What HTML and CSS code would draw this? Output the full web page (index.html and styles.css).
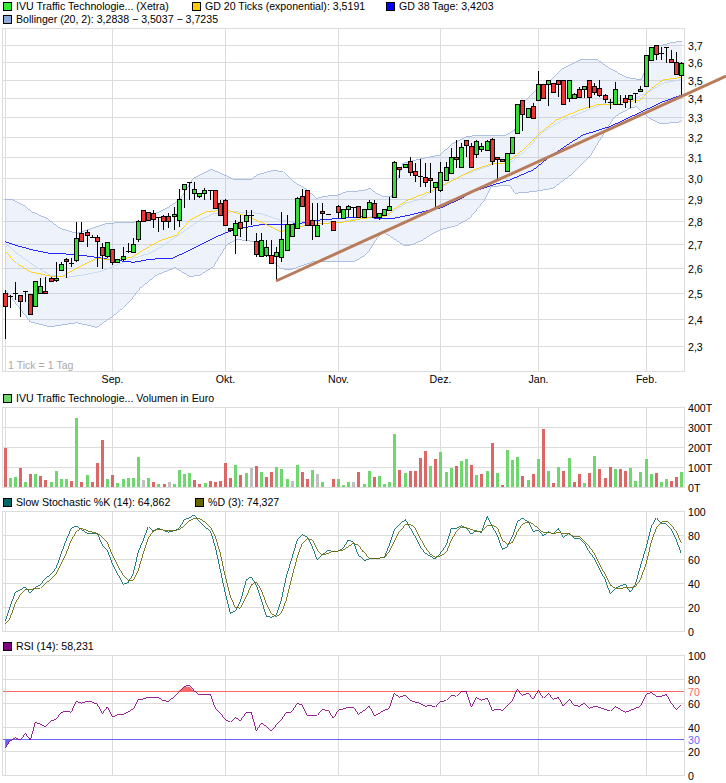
FILE: index.html
```html
<!DOCTYPE html>
<html lang="de">
<head>
    <meta charset="UTF-8">
    <title>IVU Traffic Technologies Chart</title>
    <link rel="stylesheet" href="styles.css">
</head>
<body>

    <div class="chart">
        <div class="legend">
            <div class="legend-row">
                <span class="legend-item item-wide"><i class="swatch sw-green"></i>IVU Traffic Technologie... (Xetra)</span>
                <span class="legend-item item-wider"><i class="swatch sw-yellow"></i>GD 20 Ticks (exponential): 3,5191</span>
                <span class="legend-item"><i class="swatch sw-blue"></i>GD 38 Tage: 3,4203</span>
            </div>
            <div class="legend-row">
                <span class="legend-item"><i class="swatch sw-band"></i>Bollinger (20, 2): 3,2838 − 3,5037 − 3,7235</span>
            </div>
        </div>
        <svg id="price" class="plot" width="726" height="366" viewBox="0 26 726 366"></svg>

        <div class="legend">
            <div class="legend-row">
                <span class="legend-item"><i class="swatch sw-volume"></i>IVU Traffic Technologie... Volumen in Euro</span>
            </div>
        </div>
        <svg id="volume" class="plot" width="726" height="91" viewBox="0 405 726 91"></svg>

        <div class="legend">
            <div class="legend-row">
                <span class="legend-item item-stoch"><i class="swatch sw-teal"></i>Slow Stochastic %K (14): 64,862</span>
                <span class="legend-item"><i class="swatch sw-olive"></i>%D (3): 74,327</span>
            </div>
        </div>
        <svg id="stoch" class="plot" width="726" height="131" viewBox="0 509 726 131"></svg>

        <div class="legend">
            <div class="legend-row">
                <span class="legend-item"><i class="swatch sw-purple"></i>RSI (14): 58,231</span>
            </div>
        </div>
        <svg id="rsi" class="plot" width="726" height="130" viewBox="0 653 726 130"></svg>
    </div>

    <script src="script.js"></script>
</body>
</html>
```

FILE: styles.css
```css
body {
    margin: 0;
    padding: 0;
    background-color: white;
    font-family: 'Liberation Sans', Arial, sans-serif;
    font-size: 10.6px;
    color: #000;
}

.chart {
    width: 726px;
    height: 783px;
    overflow: hidden;
}

.plot {
    display: block;
    overflow: visible;
}

.legend-row {
    display: flex;
    height: 13px;
    line-height: 13px;
    padding-left: 3px;
    white-space: nowrap;
}

.legend-item {
    display: flex;
    align-items: center;
}

.item-wide {
    width: 189px;
}

.item-wider {
    width: 194px;
}

.item-stoch {
    width: 192px;
}

.swatch {
    width: 7px;
    height: 7px;
    margin-right: 4px;
    border: 1px solid #000;
}

.sw-green { background-color: #33ee33; }
.sw-yellow { background-color: #ffcc00; }
.sw-blue { background-color: #0000ff; }
.sw-band { background-color: #8caadc; }
.sw-volume { background-color: #6ed86e; }
.sw-teal { background-color: #006666; }
.sw-olive { background-color: #666600; }
.sw-purple { background-color: #800080; }

.plot text {
    font-family: 'Liberation Sans', Arial, sans-serif;
    font-size: 10.6px;
    fill: #000;
    dominant-baseline: central;
}

.plot .month {
    text-anchor: middle;
}

.plot .tick-note {
    fill: #aaa;
}

.plot .over { fill: #ff6666; }
.plot .under { fill: #6666ff; }

.grid {
    stroke: #dcdcdc;
    stroke-width: 1;
    shape-rendering: crispEdges;
}

.series {
    fill: none;
    stroke-width: 0.85;
    shape-rendering: crispEdges;
}

.band-fill {
    fill: #8cafe6;
    fill-opacity: 0.15;
    stroke: none;
}

.band-line { stroke: #9fb4de; }
.band-mid { stroke: #c3d4f2; }
.ema-line { stroke: #ffcc00; }
.sma-line { stroke: #0000ff; }
.k-line { stroke: #006666; }
.d-line { stroke: #666600; }
.rsi-line { stroke: #800080; }
.over-line { stroke: #ff6666; stroke-width: 1; }
.under-line { stroke: #6666ff; stroke-width: 1; }

.trend {
    stroke: #b97c5b;
    stroke-width: 3;
}

.wick {
    stroke: #000;
    shape-rendering: crispEdges;
}

.body {
    stroke: #000;
    shape-rendering: crispEdges;
}

.up { fill: #33dd33; }
.down { fill: #ee3333; }

.vol-up { fill: #6ed86e; }
.vol-down { fill: #dd6666; }
.vol-flat { fill: #c0c0c0; }

.fill-over { fill: #ff6666; }
.fill-under { fill: #6666ff; }
```

FILE: script.js
```js
// All series below are kept in 3x units (pixel * 3), the right half has its x counted from 1089.
const SVG_NS = 'http://www.w3.org/2000/svg';
const RIGHT = 1089;

const monthLines = [5, 112, 225, 338, 440, 538, 646];
const months = [[112, 'Sep.'], [225, 'Okt.'], [338, 'Nov.'], [440, 'Dez.'], [538, 'Jan.'], [646, 'Feb.']];

function el(svg, tag, attrs, text) {
    const node = document.createElementNS(SVG_NS, tag);
    for (const key in attrs) {
        node.setAttribute(key, attrs[key]);
    }
    if (text) {
        node.textContent = text;
    }
    svg.appendChild(node);
    return node;
}

function drawGrid(svg, top, bottom, rows) {
    for (const y of rows) {
        el(svg, 'line', { class: 'grid', x1: 2, x2: 685, y1: y + 0.5, y2: y + 0.5 });
    }
    el(svg, 'line', { class: 'grid', x1: 2.5, x2: 2.5, y1: top, y2: bottom + 1 });
    el(svg, 'line', { class: 'grid', x1: 684.5, x2: 684.5, y1: top, y2: bottom + 1 });
    for (const x of monthLines) {
        el(svg, 'line', { class: 'grid', x1: x + 0.5, x2: x + 0.5, y1: top, y2: bottom + 1 });
    }
}

function drawLabels(svg, labels) {
    for (const [y, text, extra] of labels) {
        el(svg, 'text', { x: 688, y: y + 0.5, class: extra || '' }, text);
    }
}

// left and right are flat x,y lists
function toPoints(left, right) {
    const pts = [];
    for (let i = 0; i < left.length; i += 2) {
        pts.push([left[i] / 3, left[i + 1] / 3]);
    }
    for (let i = 0; i < right.length; i += 2) {
        pts.push([(right[i] + RIGHT) / 3, right[i + 1] / 3]);
    }
    return pts;
}

function pointsAttr(pts) {
    return pts.map(p => p[0].toFixed(1) + ',' + p[1].toFixed(1)).join(' ');
}

function drawSeries(svg, cls, left, right, dy) {
    const pts = toPoints(left, right).map(p => [p[0], p[1] + (dy || 0)]);
    el(svg, 'polyline', { class: 'series ' + cls, points: pointsAttr(pts) });
    return pts;
}

/* ---- price panel ---- */
const upperL = [16,598,40,600,70,615,95,635,140,655,180,685,230,700,260,690,320,670,390,667,420,665,445,650,500,625,530,605,540,598,580,535,635,508,700,537,755,538,770,525,820,511,850,515,880,545,915,565,950,595,975,589,1015,585,1040,575,1089,572];
const upperR = [20,565,40,580,60,590,85,590,120,490,170,477,230,465,270,430,310,410,350,405,430,405,455,390,470,320,520,270,560,245,600,205,650,180,700,177,740,205,790,232,835,240,850,200,880,140,900,135,930,127,957,124];
const lowerL = [16,870,40,900,90,965,150,980,230,968,290,982,340,948,385,910,420,865,470,825,525,803,570,830,600,825,640,800,680,735,710,718,765,725,800,765,840,805,870,810,940,785,1000,783,1060,785,1089,770];
const lowerR = [20,750,45,710,60,695,90,715,125,738,150,733,180,720,210,700,235,688,280,677,320,655,365,600,385,560,440,555,455,580,510,575,570,565,630,520,680,470,735,380,755,350,800,325,820,320,860,355,890,370,945,368,957,360];
const midL = [16,730,50,760,100,795,150,825,200,832,250,825,300,815,350,795,400,775,450,760,500,730,550,695,600,660,640,642,700,635,780,640,840,660,900,670,960,672,1020,665,1089,655];
const midR = [80,640,130,610,165,600,200,580,300,525,400,490,440,490,490,450,540,395,600,360,700,320,740,305,800,300,850,280,900,250,957,238];
const emaL = [16,755,50,790,90,815,150,828,185,830,230,805,290,775,340,780,395,772,430,750,480,722,530,705,570,660,620,635,680,630,730,645,780,665,840,695,880,685,920,675,980,670,1040,665,1089,655];
const emaR = [60,650,75,645,90,630,120,610,135,600,200,575,270,540,330,510,390,490,430,490,480,450,530,400,580,360,650,330,700,315,750,312,830,300,860,270,900,240,957,232];
const smaL = [16,725,50,737,100,750,150,760,220,763,290,772,340,780,400,787,450,778,520,774,580,745,640,715,680,697,720,685,790,673,850,675,900,670,960,660,1020,655,1089,650];
const smaR = [60,657,90,655,140,645,200,630,230,625,290,598,330,575,390,555,440,540,510,510,560,470,620,430,660,405,740,380,900,305,957,285];

// x, wick top, wick bottom, body top, body bottom, kind (g, r, d = doji)
const candlesL = [
    [16,870,1017,880,920,'r'],[31,885,925,888,888,'d'],[46,847,900,880,880,'d'],[61,885,950,887,905,'r'],
    [76,875,905,875,875,'d'],[91,883,943,883,943,'r'],[106,845,920,845,920,'g'],[121,835,880,860,880,'g'],
    [136,830,880,874,881,'r'],[154,830,845,836,845,'r'],[169,785,845,836,841,'g'],[184,785,812,793,812,'g'],
    [199,773,833,778,785,'r'],[214,775,800,790,790,'d'],[229,667,785,715,780,'g'],[244,667,725,700,725,'r'],
    [262,690,740,697,706,'r'],[277,705,715,712,712,'d'],[292,705,800,712,725,'r'],[307,730,807,742,767,'r'],
    [322,727,775,727,770,'g'],[337,748,795,748,787,'r'],[352,778,787,778,787,'g'],[370,740,782,769,779,'g'],
    [385,730,758,755,755,'d'],[400,715,758,733,758,'g'],[415,660,725,665,719,'g'],[430,631,665,631,665,'r'],
    [445,637,660,637,660,'r'],[460,630,685,640,658,'r'],[475,650,695,652,652,'d'],[490,645,690,650,665,'r'],
    [505,640,685,650,665,'r'],[523,620,690,643,650,'g'],[538,568,680,598,662,'g'],[553,553,625,553,568,'g'],
    [568,547,600,547,547,'d'],[583,547,600,568,580,'g'],[598,580,593,580,590,'g'],[613,565,600,571,580,'g'],
    [631,572,600,572,572,'d'],[646,572,625,572,625,'r'],[661,600,647,610,647,'r'],[676,597,677,600,677,'r'],
    [691,685,695,685,692,'r'],[706,660,762,670,707,'g'],[721,645,710,667,685,'r'],[739,630,722,646,665,'g'],
    [754,630,675,646,646,'d'],[769,700,770,725,763,'r'],[784,700,770,722,770,'g'],[799,720,770,742,765,'g'],
    [814,720,790,765,790,'r'],[829,740,843,757,770,'g'],[844,637,785,718,772,'g'],[862,645,750,673,751,'g'],
    [877,673,710,673,710,'g'],[892,590,685,594,685,'g'],[907,568,620,590,620,'r'],[922,571,677,571,677,'r'],
    [937,610,720,662,677,'r'],[952,610,710,677,710,'g'],[967,610,675,633,641,'r'],[985,642,642,642,642,'d'],
    [1000,665,692,665,692,'r'],[1015,615,655,620,637,'r'],[1030,628,655,628,655,'g'],[1045,615,650,620,628,'g'],
    [1060,622,655,622,622,'d'],[1075,620,653,620,653,'r']
];
const candlesR = [
    [4,627,652,627,652,'g'],[19,600,627,607,627,'g'],[34,600,652,610,652,'r'],[49,640,660,640,652,'g'],
    [64,627,647,627,647,'g'],[79,590,632,618,632,'g'],[94,484,592,487,592,'g'],[109,505,535,503,509,'r'],
    [127,492,503,492,503,'g'],[142,472,527,484,516,'r'],[157,490,545,515,526,'r'],[172,478,560,530,530,'d'],
    [187,490,560,532,547,'r'],[202,490,580,535,541,'r'],[217,545,620,547,562,'g'],[232,485,575,517,571,'g'],
    [250,485,541,502,541,'g'],[265,445,520,472,520,'g'],[280,420,505,472,478,'r'],[295,430,505,442,502,'g'],
    [310,420,472,421,436,'r'],[325,430,505,439,502,'r'],[340,420,475,424,463,'g'],[355,430,455,439,448,'g'],
    [373,420,451,424,451,'g'],[388,415,495,418,484,'r'],[403,470,537,472,478,'r'],[418,478,484,479,484,'r'],
    [433,458,514,460,514,'g'],[448,412,460,412,460,'g'],[463,313,400,313,400,'g'],[478,300,392,301,343,'r'],
    [496,325,352,325,352,'g'],[511,310,358,320,356,'r'],[526,213,300,253,301,'g'],[541,253,295,253,295,'r'],
    [556,240,318,241,253,'g'],[571,250,277,250,277,'r'],[586,240,290,241,253,'r'],[601,241,313,241,313,'r'],
    [619,240,305,241,295,'g'],[634,280,295,283,295,'g'],[649,260,295,268,292,'r'],[664,258,295,259,268,'g'],
    [679,240,323,241,292,'r'],[694,250,285,259,277,'r'],[709,240,290,265,286,'r'],[727,283,308,286,298,'r'],
    [742,297,326,307,307,'d'],[757,247,315,268,313,'g'],[772,285,315,313,313,'d'],[787,285,325,295,307,'r'],
    [802,285,325,286,298,'g'],[817,280,310,280,280,'d'],[832,258,275,268,274,'g'],[850,166,259,166,259,'g'],
    [865,140,181,142,181,'g'],[880,135,180,136,163,'r'],[895,140,180,160,160,'d'],[910,140,188,143,143,'d'],
    [925,150,188,178,187,'r'],[940,155,225,187,223,'r'],[955,187,285,190,226,'g']
];

function drawCandle(svg, c, offset) {
    const x = Math.floor((c[0] + offset) / 3);
    el(svg, 'line', { class: 'wick', x1: x + 0.5, x2: x + 0.5, y1: c[1] / 3, y2: c[2] / 3 });
    if (c[5] === 'd') {
        const y = Math.floor(c[3] / 3) + 0.5;
        el(svg, 'line', { class: 'wick', x1: x - 2, x2: x + 3, y1: y, y2: y });
        return;
    }
    const top = Math.floor(c[3] / 3) + 0.5;
    const bottom = Math.floor(c[4] / 3) + 0.5;
    el(svg, 'rect', {
        class: 'body ' + (c[5] === 'g' ? 'up' : 'down'),
        x: x - 1.5, y: top, width: 4, height: Math.max(bottom - top, 1)
    });
}

function drawPrice() {
    const svg = document.getElementById('price');
    drawGrid(svg, 28, 371, [28,45,62,80,98,117,137,157,178,199,221,244,268,293,319,346,371]);

    const upper = toPoints(upperL, upperR);
    const lower = toPoints(lowerL, lowerR);
    el(svg, 'polygon', { class: 'band-fill', points: pointsAttr(upper.concat(lower.slice().reverse())) });
    drawSeries(svg, 'band-line', upperL, upperR);
    drawSeries(svg, 'band-line', lowerL, lowerR);
    drawSeries(svg, 'band-mid', midL, midR);
    drawSeries(svg, 'sma-line', smaL, smaR);
    drawSeries(svg, 'ema-line', emaL, emaR);

    candlesL.forEach(c => drawCandle(svg, c, 0));
    candlesR.forEach(c => drawCandle(svg, c, RIGHT));

    el(svg, 'line', { class: 'trend', x1: 276, y1: 281, x2: 726, y2: 76 });

    drawLabels(svg, [[45,'3,7'],[62,'3,6'],[80,'3,5'],[98,'3,4'],[117,'3,3'],[137,'3,2'],[157,'3,1'],[178,'3,0'],[199,'2,9'],[221,'2,8'],[244,'2,7'],[268,'2,6'],[293,'2,5'],[319,'2,4'],[346,'2,3']]);
    for (const [x, text] of months) {
        el(svg, 'text', { x: x + 0.5, y: 379, class: 'month' }, text);
    }
    el(svg, 'text', { x: 8, y: 365, class: 'tick-note' }, '1 Tick = 1 Tag');
}

/* ---- volume panel ---- x, height in pixels, kind (g, r, n) */
const volumeL = [16,39,'r',31,9,'g',46,10,'g',61,19,'r',76,5,'g',91,13,'r',106,13,'g',121,11,'r',136,7,'r',154,5,'g',169,16,'g',184,8,'g',199,8,'g',214,6,'r',229,69,'g',244,5,'r',262,12,'g',277,5,'r',292,24,'r',307,47,'r',322,8,'g',337,12,'r',352,4,'g',370,8,'g',385,9,'g',400,9,'g',415,30,'g',430,7,'n',445,9,'g',460,5,'r',475,3,'g',493,3,'r',508,5,'n',523,3,'g',538,17,'g',553,13,'g',568,14,'g',583,7,'r',598,3,'r',616,4,'g',631,6,'r',646,5,'r',661,6,'r',676,24,'r',691,9,'r',706,22,'g',721,12,'r',739,14,'g',754,19,'n',769,21,'r',784,15,'g',799,10,'r',814,15,'r',829,20,'g',844,18,'g',862,8,'g',877,6,'n',892,22,'g',907,15,'r',922,8,'r',937,17,'g',952,13,'n',967,5,'g',1000,8,'r',1015,8,'g',1030,2,'g',1045,5,'g',1060,5,'n',1075,15,'r'];
const volumeR = [4,3,'g',19,16,'g',34,10,'r',49,11,'g',64,3,'g',79,5,'g',94,53,'g',109,17,'r',127,14,'g',142,16,'r',157,16,'r',172,29,'r',187,36,'r',202,21,'g',217,28,'r',232,35,'g',250,15,'g',265,19,'g',280,21,'r',295,26,'g',310,28,'g',325,22,'r',340,12,'g',355,13,'r',373,16,'g',388,44,'r',403,14,'g',418,2,'r',433,37,'g',448,27,'g',463,30,'g',478,11,'r',496,7,'g',511,13,'r',526,28,'g',541,58,'r',556,16,'g',571,4,'r',586,20,'g',601,16,'r',619,29,'g',634,5,'r',649,13,'r',664,4,'g',679,14,'r',694,31,'g',709,18,'r',727,9,'r',742,20,'r',757,18,'g',772,18,'r',787,16,'r',802,19,'g',817,6,'g',832,15,'g',850,28,'g',865,13,'g',880,14,'r',895,5,'g',910,8,'g',925,6,'r',940,10,'r',955,15,'g'];

function drawBars(svg, data, offset) {
    const kinds = { g: 'vol-up', r: 'vol-down', n: 'vol-flat' };
    for (let i = 0; i < data.length; i += 3) {
        const x = Math.floor((data[i] + offset) / 3) - 1;
        el(svg, 'rect', { class: kinds[data[i + 2]], x: x, y: 487 - data[i + 1], width: 3, height: data[i + 1] });
    }
}

function drawVolume() {
    const svg = document.getElementById('volume');
    drawGrid(svg, 407, 487, [407,427,447,467,487]);
    drawBars(svg, volumeL, 0);
    drawBars(svg, volumeR, RIGHT);
    drawLabels(svg, [[407,'400T'],[427,'300T'],[447,'200T'],[467,'100T'],[487,'0T']]);
}

/* ---- stochastic panel ---- y counted from 490 */
const kL = [16,392,30,350,46,307,60,300,76,290,91,310,106,292,121,285,136,265,154,253,169,232,184,190,199,150,214,115,229,108,244,118,262,130,292,130,307,165,322,180,337,220,352,250,370,283,385,278,400,250,415,185,430,150,445,110,460,125,475,115,490,120,505,127,523,122,538,115,553,90,568,83,583,75,598,95,613,110,631,122,646,170,661,240,676,310,691,370,706,363,721,335,739,270,754,260,769,285,784,330,799,378,814,382,829,375,844,330,859,260,874,210,892,150,907,133,922,142,937,170,952,210,967,195,985,180,1000,185,1015,183,1030,175,1045,150,1060,155,1075,195,1089,207];
const kR = [4,212,19,206,64,203,79,165,94,120,109,105,127,88,142,115,157,140,172,170,187,190,202,198,217,208,232,190,250,165,265,115,280,115,295,107,310,115,325,132,340,122,355,128,373,78,388,110,403,135,418,178,433,170,448,140,463,95,478,85,496,95,511,125,526,120,541,138,556,125,571,133,586,115,601,142,619,130,634,145,649,145,664,160,679,185,694,205,709,235,727,270,742,312,757,295,772,287,787,283,802,307,817,285,832,230,850,170,865,110,880,83,895,100,910,102,925,118,940,150,955,190];
const dL = [16,403,30,385,46,340,60,315,76,298,91,300,106,295,121,295,136,280,154,268,169,250,184,220,199,190,214,150,229,125,244,115,262,122,292,130,307,140,322,158,337,195,352,225,370,255,385,272,400,270,415,240,430,190,445,145,460,122,475,117,490,120,505,122,523,122,538,118,553,108,568,93,583,85,598,85,613,95,631,110,646,140,661,190,676,260,691,320,706,352,721,355,739,320,754,285,769,275,784,300,799,340,814,370,829,380,844,370,859,330,874,270,892,200,907,160,922,145,937,150,952,180,967,195,985,190,1000,183,1015,183,1030,180,1045,170,1060,160,1075,165,1089,185];
const dR = [4,187,19,206,64,203,79,185,94,155,109,125,127,105,142,102,157,115,172,145,187,172,202,192,217,202,232,198,250,187,265,150,280,125,295,112,310,113,325,118,340,123,355,125,373,108,388,105,403,113,418,150,433,163,448,158,463,125,478,103,496,95,511,103,526,115,541,128,556,128,571,130,586,128,601,130,619,132,634,140,649,140,664,153,679,170,694,190,709,220,727,255,742,285,757,295,772,297,787,292,802,292,817,290,832,270,850,220,865,155,880,115,895,97,910,93,925,105,940,125,955,158];

function drawStoch() {
    const svg = document.getElementById('stoch');
    drawGrid(svg, 511, 631, [511,535,559,583,607,631]);
    drawSeries(svg, 'k-line', kL, kR, 490);
    drawSeries(svg, 'd-line', dL, dR, 490);
    drawLabels(svg, [[511,'100'],[535,'80'],[559,'60'],[583,'40'],[607,'20'],[631,'0']]);
}

/* ---- RSI panel ---- y counted from 635 */
const rsiL = [16,338,30,318,46,308,61,316,76,295,91,316,106,262,121,267,136,275,154,258,169,252,184,232,199,229,214,232,229,198,244,205,262,199,277,201,292,208,307,236,322,216,337,246,352,240,370,238,385,230,400,222,415,192,430,192,445,186,460,188,475,187,490,197,505,199,523,185,538,170,553,155,568,150,583,168,598,180,613,177,631,177,646,220,661,235,676,254,691,262,706,247,721,257,739,232,754,232,769,288,784,265,799,273,814,289,829,270,844,255,859,232,874,232,892,205,907,211,922,241,937,241,952,241,967,224,985,226,1000,250,1015,226,1030,222,1045,216,1060,216,1075,238,1089,228];
const rsiR = [4,226,19,214,34,242,49,235,64,226,79,220,94,175,109,187,127,181,142,196,157,202,172,205,187,214,202,211,217,217,232,201,250,196,265,181,280,184,295,169,310,169,325,217,340,187,355,196,373,190,388,226,403,223,418,226,433,214,448,196,463,163,478,181,496,175,511,193,526,166,541,190,556,175,571,193,586,187,601,214,619,193,634,211,649,214,664,205,679,220,694,214,709,217,727,223,742,229,757,214,772,223,787,232,802,226,817,220,832,214,850,178,865,172,880,184,895,184,910,178,925,205,940,223,955,211];

function drawRsi() {
    const svg = document.getElementById('rsi');
    drawGrid(svg, 655, 775, [655,679,703,727,751,775]);

    // areas where the RSI leaves the 30..70 range
    el(svg, 'polygon', { class: 'fill-over', points: '179,691 184.3,686.7 189.3,686.7 194.3,691' });
    el(svg, 'polygon', { class: 'fill-under', points: '5,739 5.3,747.7 10,741 11,739' });

    el(svg, 'line', { class: 'series over-line', x1: 3, x2: 684, y1: 691.5, y2: 691.5 });
    el(svg, 'line', { class: 'series under-line', x1: 3, x2: 684, y1: 739.5, y2: 739.5 });
    drawSeries(svg, 'rsi-line', rsiL, rsiR, 635);
    drawLabels(svg, [[655,'100'],[679,'80'],[691,'70','over'],[703,'60'],[727,'40'],[739,'30','under'],[751,'20'],[775,'0']]);
}

drawPrice();
drawVolume();
drawStoch();
drawRsi();
```
